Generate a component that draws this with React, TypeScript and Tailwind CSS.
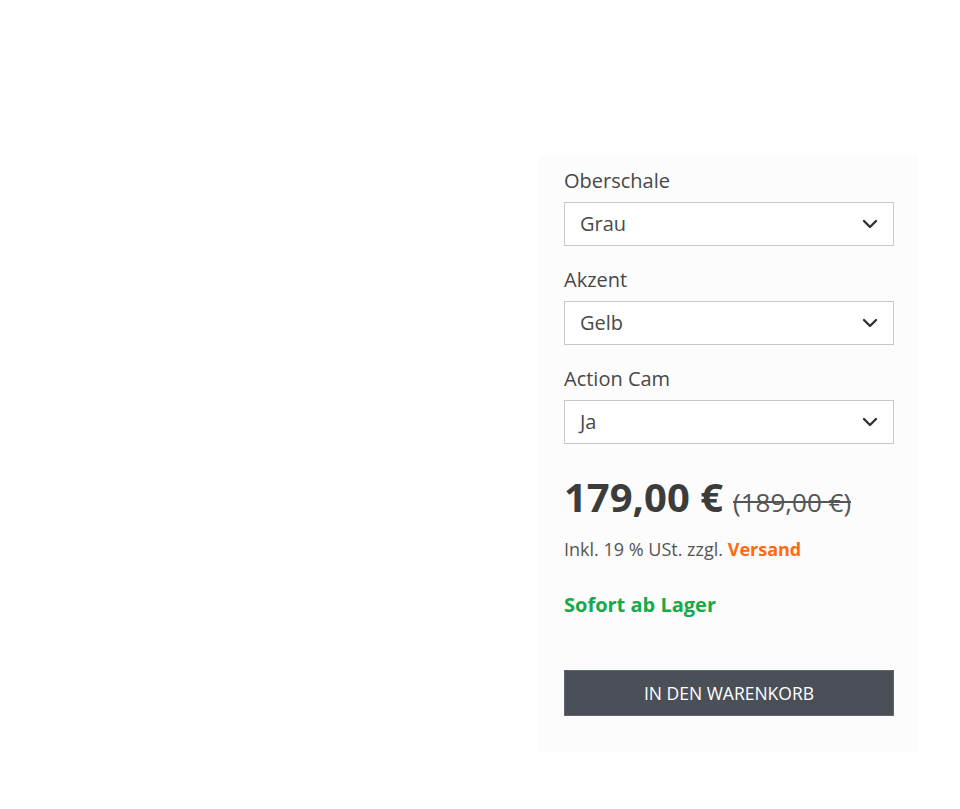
import React from "react";

function Chevron() {
  return (
    <svg width="16" height="10" viewBox="0 0 16 10" fill="none">
      <path d="M2 2l6 6 6-6" stroke="#333" strokeWidth="2.4" strokeLinecap="round" strokeLinejoin="round" />
    </svg>
  );
}

function Field({ label, value }: { label: string; value: string }) {
  return (
    <div className="flex flex-col">
      <div className="text-[20px] leading-[28px] text-[#484848]">{label}</div>
      <div className="mt-[7px] h-[44px] border border-[#c8c8c8] bg-white flex items-center justify-between pl-[15px] pr-[15px]">
        <span className="text-[20px] text-[#4a4a4a]">{value}</span>
        <Chevron />
      </div>
    </div>
  );
}

export default function App() {
  return (
    <div className="w-[960px] h-[809px] bg-white flex" style={{ fontFamily: '"Open Sans", sans-serif' }}>
      <div className="w-[539px] shrink-0" />
      <div className="mt-[155px] w-[379px] h-[597px] bg-[#fbfcfb] pl-[25px] pr-[24px] pt-[12px] flex flex-col">
        <div className="flex flex-col gap-[20px]">
          <Field label="Oberschale" value="Grau" />
          <Field label="Akzent" value="Gelb" />
          <Field label="Action Cam" value="Ja" />
        </div>
        <div className="mt-[26px] flex items-baseline gap-[10px] leading-[54px]">
          <span className="text-[40px] font-bold text-[#3c3c3c]">179,00 €</span>
          <span className="text-[26px] text-[#555] line-through">(189,00 €)</span>
        </div>
        <div className="mt-[8px] text-[18px] leading-[25px] text-[#555]">
          Inkl. 19 % USt. zzgl. <span className="font-bold text-[#ff6a0e]">Versand</span>
        </div>
        <div className="mt-[29px] text-[20px] leading-[28px] font-bold text-[#16aa4a]">Sofort ab Lager</div>
        <button className="mt-[51px] h-[46px] w-[330px] bg-[#4b5058] text-white text-[17.5px] uppercase border border-[#60656c]">
          In den Warenkorb
        </button>
      </div>
    </div>
  );
}
